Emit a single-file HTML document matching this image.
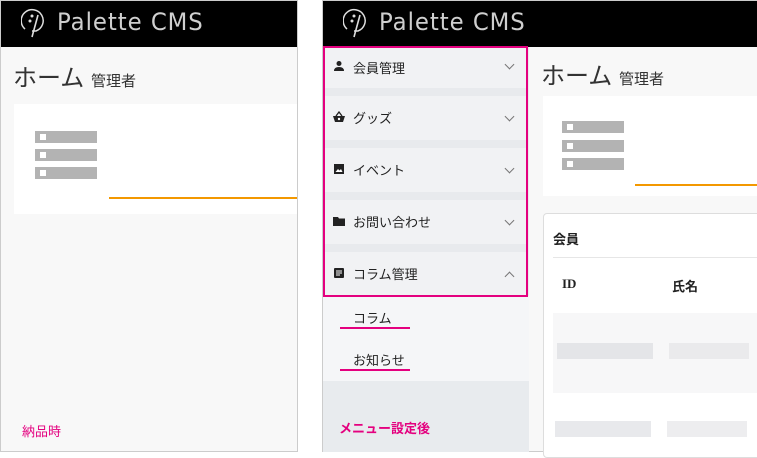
<!DOCTYPE html>
<html><head><meta charset="utf-8"><style>
*{margin:0;padding:0;box-sizing:border-box}
body{width:757px;height:452px;background:#fff;position:relative;overflow:hidden;font-family:"Liberation Sans","Noto Sans CJK JP",sans-serif;color:#333}
.abs{position:absolute}
.bar{background:#b3b3b3;width:62px;height:12px;position:absolute}
.bar:before{content:"";position:absolute;left:5px;top:3px;width:6px;height:6px;background:#fff}
.logo{color:#cfcfcf;font-size:24px;letter-spacing:1px;font-family:"DejaVu Sans",sans-serif;font-weight:normal;transform:scaleX(.95);transform-origin:left}
.item{position:absolute;left:324px;width:203px;height:44px;background:#f1f2f4;font-size:13px;color:#222}
.item span{position:absolute;left:29px;top:12px}
.item svg{position:absolute;left:9px;top:15px}
.item b{position:absolute;right:14px;top:17px;width:7px;height:7px;border-right:1.6px solid #777;border-bottom:1.6px solid #777;transform:rotate(45deg)}
.item b.up{transform:rotate(-135deg);top:21px}
.ttl{font-size:24px;color:#333}
.ttl span{font-size:15px}
</style></head><body>
<div class="abs" style="left:0;top:0;width:298px;height:452px;border:1px solid #ccc;background:#f8f8f8"></div>
<div class="abs" style="left:1px;top:1px;width:296px;height:46px;background:#000"></div>
<svg class="abs" style="left:21px;top:7px" width="28" height="32" viewBox="0 0 28 32"><path d="M4 22 A11 11 0 1 1 15 24 L11 24" fill="none" stroke="#ddd" stroke-width="1.5"/><path d="M17 8 L11 30" stroke="#ddd" stroke-width="1.6"/><circle cx="9" cy="14" r="1.5" fill="#ddd"/><circle cx="11" cy="9" r="1.5" fill="#ddd"/></svg>
<div class="abs logo" style="left:57px;top:8px">Palette CMS</div>
<div class="abs ttl" style="left:13px;top:58px">ホーム <span>管理者</span></div>
<div class="abs" style="left:14px;top:104px;width:283px;height:110px;background:#fff"></div>
<div class="bar" style="left:35px;top:131px"></div>
<div class="bar" style="left:35px;top:149px"></div>
<div class="bar" style="left:35px;top:167px"></div>
<div class="abs" style="left:109px;top:197px;width:188px;height:1.5px;background:#f39800"></div>
<div class="abs" style="left:22px;top:421px;font-size:13px;color:#e4007f">納品時</div>

<div class="abs" style="left:322px;top:0;width:435px;height:452px;border:1px solid #ccc;border-right:none;background:#f8f8f8"></div>
<div class="abs" style="left:323px;top:1px;width:434px;height:46px;background:#000"></div>
<svg class="abs" style="left:343px;top:7px" width="28" height="32" viewBox="0 0 28 32"><path d="M4 22 A11 11 0 1 1 15 24 L11 24" fill="none" stroke="#ddd" stroke-width="1.5"/><path d="M17 8 L11 30" stroke="#ddd" stroke-width="1.6"/><circle cx="9" cy="14" r="1.5" fill="#ddd"/><circle cx="11" cy="9" r="1.5" fill="#ddd"/></svg>
<div class="abs logo" style="left:379px;top:8px">Palette CMS</div>
<div class="abs" style="left:323px;top:47px;width:206px;height:334px;background:#e8eaed"></div>
<div class="abs" style="left:323px;top:296px;width:206px;height:85px;background:#f5f6f8"></div>
<div class="abs" style="left:323px;top:381px;width:206px;height:71px;background:#e8ebee"></div>
<div class="item" style="top:48px;height:40px"><svg width="12" height="12" viewBox="0 0 12 12" style="top:12px"><circle cx="6" cy="3.5" r="2.5" fill="#222"/><path d="M1 11 Q1 7 6 7 Q11 7 11 11Z" fill="#222"/></svg><span style="top:10px">会員管理</span><b style="top:13px"></b></div>
<div class="item" style="top:96px"><svg width="12" height="12" viewBox="0 0 12 12"><path d="M0 5H12L10 11H2Z" fill="#222"/><path d="M3 5L6 1L9 5" fill="none" stroke="#222" stroke-width="1.3"/><circle cx="6" cy="8" r="1.2" fill="#fff"/></svg><span>グッズ</span><b></b></div>
<div class="item" style="top:148px"><svg width="12" height="12" viewBox="0 0 12 12"><rect x="1" y="1" width="10" height="10" fill="#222"/><path d="M2.5 9L5 6L6.5 7.5L8 6L9.5 9Z" fill="#fff"/></svg><span>イベント</span><b></b></div>
<div class="item" style="top:200px"><svg width="12" height="12" viewBox="0 0 12 12"><path d="M0 2H5L6 3.5H12V11H0Z" fill="#222"/></svg><span>お問い合わせ</span><b></b></div>
<div class="item" style="top:252px;height:43px"><svg width="12" height="12" viewBox="0 0 12 12"><rect x="1" y="1" width="10" height="10" rx="1" fill="#222"/><path d="M3 4H9M3 6H9M3 8H7" stroke="#fff" stroke-width="1"/></svg><span>コラム管理</span><b class="up"></b></div>
<div class="abs" style="left:323px;top:46px;width:205px;height:251px;border:2px solid #e4007f"></div>
<div class="abs" style="left:353px;top:308px;font-size:13px;color:#222">コラム</div>
<div class="abs" style="left:340px;top:327px;width:70px;height:2px;background:#e4007f"></div>
<div class="abs" style="left:353px;top:350px;font-size:13px;color:#222">お知らせ</div>
<div class="abs" style="left:340px;top:369px;width:70px;height:2px;background:#e4007f"></div>
<div class="abs" style="left:339px;top:418px;font-size:13px;font-weight:bold;color:#e4007f">メニュー設定後</div>
<div class="abs ttl" style="left:541px;top:56px">ホーム <span>管理者</span></div>
<div class="abs" style="left:543px;top:96px;width:214px;height:100px;background:#fff"></div>
<div class="bar" style="left:562px;top:121px"></div>
<div class="bar" style="left:562px;top:140px"></div>
<div class="bar" style="left:562px;top:158px"></div>
<div class="abs" style="left:635px;top:184px;width:122px;height:1.5px;background:#f39800"></div>
<div class="abs" style="left:543px;top:213px;width:220px;height:245px;background:#fff;border:1px solid #ddd;border-radius:4px"></div>
<div class="abs" style="left:553px;top:229px;font-size:13px;font-weight:bold;color:#222">会員</div>
<div class="abs" style="left:553px;top:257px;width:204px;height:1px;background:#e6e6e6"></div>
<div class="abs" style="left:562px;top:276px;font-size:13px;font-weight:bold;color:#222;font-family:'Liberation Serif',serif">ID</div>
<div class="abs" style="left:672px;top:276px;font-size:13px;font-weight:bold;color:#222">氏名</div>
<div class="abs" style="left:553px;top:313px;width:204px;height:80px;background:#f7f7f8"></div>
<div class="abs" style="left:557px;top:343px;width:96px;height:16px;background:#e4e5e8"></div>
<div class="abs" style="left:669px;top:343px;width:80px;height:16px;background:#eaeaec"></div>
<div class="abs" style="left:555px;top:421px;width:96px;height:16px;background:#e8e9ec"></div>
<div class="abs" style="left:667px;top:421px;width:80px;height:16px;background:#ededef"></div>
</body></html>
